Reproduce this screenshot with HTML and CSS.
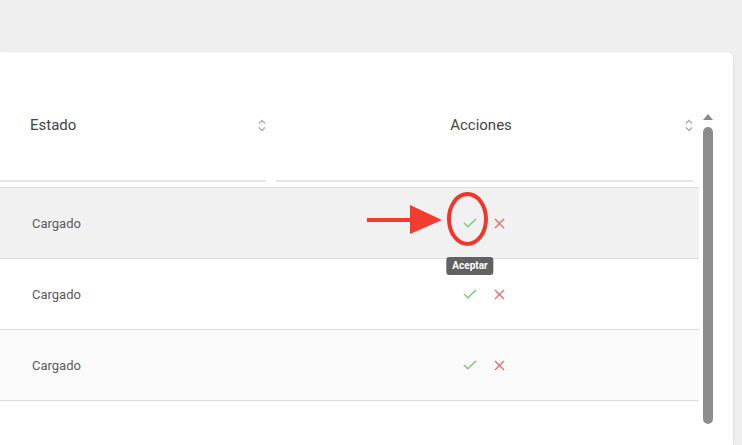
FILE: index.html
```html
<!DOCTYPE html>
<html lang="es">
<head>
    <meta charset="UTF-8">
    <meta name="viewport" content="width=device-width, initial-scale=1.0">
    <title>Documentos</title>
    <link rel="stylesheet" href="styles.css">
</head>
<body>
    <div class="card">
        <div class="table-wrap">
            <div class="table-head">
                <div class="th">
                    <span>Estado</span>
                    <svg class="sort" width="8" height="13" viewBox="0 0 8 13"><path d="M1 4.5 L4 1.5 L7 4.5 M1 8.5 L4 11.5 L7 8.5" fill="none" stroke="#aaa" stroke-width="1.3"/></svg>
                </div>
                <div class="th th-center">
                    <span>Acciones</span>
                    <svg class="sort" width="8" height="13" viewBox="0 0 8 13"><path d="M1 4.5 L4 1.5 L7 4.5 M1 8.5 L4 11.5 L7 8.5" fill="none" stroke="#aaa" stroke-width="1.3"/></svg>
                </div>
            </div>
            <div class="tbody">
                <div class="tr hover">
                    <div class="td">Cargado</div>
                    <div class="td actions">
                        <button class="icon-btn">
                            <svg width="14" height="10" viewBox="0 0 14 10"><path d="M1 5 L4.8 8.8 L13 1" fill="none" stroke="#7cc47f" stroke-width="1.4"/></svg>
                            <span class="tooltip">Aceptar</span>
                        </button>
                        <button class="icon-btn">
                            <svg width="11" height="11" viewBox="0 0 11 11"><path d="M1 1 L10 10 M10 1 L1 10" fill="none" stroke="#e07070" stroke-width="1.4"/></svg>
                        </button>
                    </div>
                </div>
                <div class="tr">
                    <div class="td">Cargado</div>
                    <div class="td actions">
                        <button class="icon-btn">
                            <svg width="14" height="10" viewBox="0 0 14 10"><path d="M1 5 L4.8 8.8 L13 1" fill="none" stroke="#7cc47f" stroke-width="1.4"/></svg>
                        </button>
                        <button class="icon-btn">
                            <svg width="11" height="11" viewBox="0 0 11 11"><path d="M1 1 L10 10 M10 1 L1 10" fill="none" stroke="#e07070" stroke-width="1.4"/></svg>
                        </button>
                    </div>
                </div>
                <div class="tr striped">
                    <div class="td">Cargado</div>
                    <div class="td actions">
                        <button class="icon-btn">
                            <svg width="14" height="10" viewBox="0 0 14 10"><path d="M1 5 L4.8 8.8 L13 1" fill="none" stroke="#7cc47f" stroke-width="1.4"/></svg>
                        </button>
                        <button class="icon-btn">
                            <svg width="11" height="11" viewBox="0 0 11 11"><path d="M1 1 L10 10 M10 1 L1 10" fill="none" stroke="#e07070" stroke-width="1.4"/></svg>
                        </button>
                    </div>
                </div>
            </div>
        </div>
        <div class="scrollbar">
            <div class="scroll-arrow"></div>
            <div class="scroll-thumb"></div>
        </div>
    </div>

    <!-- annotation drawn over the screenshot -->
    <svg class="annotation" width="135" height="60" viewBox="0 0 135 60">
        <rect x="7" y="28" width="46" height="4" fill="#f43b2f"/>
        <polygon points="50,15 82,30 50,44" fill="#f43b2f"/>
        <ellipse cx="107.5" cy="29" rx="18.5" ry="25" fill="none" stroke="#f2342a" stroke-width="4"/>
    </svg>
</body>
</html>
```

FILE: styles.css
```css
body {
    margin: 0;
    background-color: #efefef;
    font-family: Roboto, "Liberation Sans", sans-serif;
    overflow: hidden;
    height: 445px;
}
.card {
    margin-top: 52px;
    width: 733px;
    height: 393px;
    background: white;
    border-radius: 0 5px 0 0;
    box-shadow: 0 1px 3px rgba(0, 0, 0, 0.12);
    display: flex;
    padding-top: 60px;
    box-sizing: border-box;
}
.table-wrap {
    width: 699px;
}
.table-head {
    display: grid;
    grid-template-columns: 266px 417px;
    column-gap: 10px;
    padding-bottom: 5px;
}
.th {
    height: 70px;
    border-bottom: 2px solid #e6e6e6;
    display: flex;
    justify-content: space-between;
    align-items: flex-start;
    padding-left: 30px;
    padding-top: 4px;
    box-sizing: border-box;
    font-size: 15px;
    line-height: 18px;
    color: #444;
}
.th .sort {
    margin-top: 3px;
}
.th-center {
    padding-left: 0;
    padding-right: 7px;
    position: relative;
    justify-content: center;
}
.th-center .sort {
    position: absolute;
    right: 0;
    top: 4px;
}
.tbody {
    border-top: 1px solid #dcdcdc;
}
.tr {
    display: grid;
    grid-template-columns: 266px 417px;
    column-gap: 10px;
    height: 70px;
    border-bottom: 1px solid #dcdcdc;
    align-items: center;
}
.tr.hover {
    background: #f1f1f1;
}
.tr.striped {
    background: #fafafa;
}
.td {
    padding-left: 32px;
    font-size: 13px;
    color: #5a5a5a;
}
.actions {
    padding-left: 0;
    display: flex;
    justify-content: center;
    gap: 5px;
}
.icon-btn {
    position: relative;
    width: 24px;
    height: 24px;
    padding: 0;
    border: none;
    background: none;
    display: flex;
    align-items: center;
    justify-content: center;
    cursor: pointer;
}
.tooltip {
    position: absolute;
    top: 46px;
    left: 50%;
    transform: translateX(-50%);
    background: #616161;
    color: white;
    font-family: Roboto, "Liberation Sans", sans-serif;
    font-size: 10px;
    font-weight: bold;
    line-height: 18px;
    padding: 0 6px;
    border-radius: 3px;
    white-space: nowrap;
}
.scrollbar {
    margin-left: 4px;
    width: 10px;
    display: flex;
    flex-direction: column;
    align-items: center;
    padding-top: 2px;
}
.scroll-arrow {
    width: 0;
    height: 0;
    border-left: 5px solid transparent;
    border-right: 5px solid transparent;
    border-bottom: 6px solid #8a8a8a;
}
.scroll-thumb {
    margin-top: 7px;
    width: 10px;
    height: 297px;
    background: #8c8c8c;
    border-radius: 5px;
}
.annotation {
    position: absolute;
    left: 360px;
    top: 190px;
}
```
